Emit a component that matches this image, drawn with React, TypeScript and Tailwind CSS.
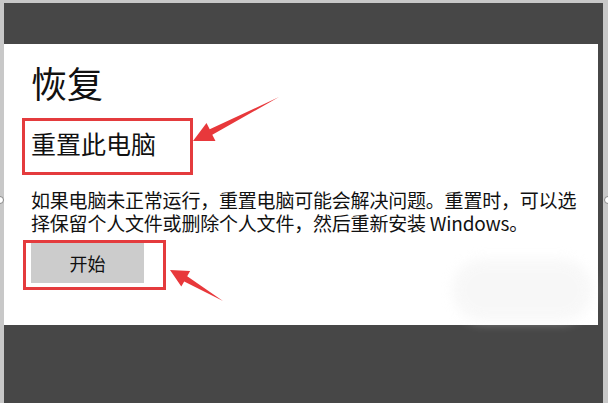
export default function App() {
  const cjk = { fontFamily: '"Noto Sans CJK SC", "Noto Sans", sans-serif' };

  return (
    <div className="relative h-[403px] w-[608px] overflow-hidden bg-[#c8c8c8] pl-[4px] pr-[5px] pt-[3px]" style={cjk}>
      <div className="flex h-full flex-col bg-[#474747]">
        <div className="h-[41px] shrink-0" />
        <div className="relative mr-[5px] flex h-[281px] shrink-0 flex-col items-start bg-white pl-[18px] pt-[14px] text-[#111]">
          <h1 className="pl-[9px] text-[36px] leading-[48px]">恢复</h1>
          <div className="mt-[12px] h-[57px] w-[171px] border-[3px] border-[#e43b3d] pl-[6px] pt-[2px]">
            <h2 className="text-[25px] leading-[40px]">重置此电脑</h2>
          </div>
          <p className="mt-[13px] w-[561px] pl-[9px] text-[19px] leading-[23px] tracking-[-0.2px]">
            如果电脑未正常运行，重置电脑可能会解决问题。重置时，可以选择保留个人文件或删除个人文件，然后重新安装 Windows。
          </p>
          <div className="ml-[1px] mt-[6px] h-[50px] w-[143px] border-[3px] border-[#e43b3d] pl-[5px]">
            <button className="h-[40px] w-[113px] bg-[#cccccc] text-[18px] text-[#111]">开始</button>
          </div>
          <div className="absolute bottom-[4px] right-[6px] h-[62px] w-[140px] rounded-full bg-[#f3f3f3] opacity-60 blur-[6px]" />
        </div>
      </div>

      {/* selection handles */}
      <div className="absolute left-[-4px] top-[196px] h-[8px] w-[8px] rounded-full border border-[#888] bg-white" />
      <div className="absolute right-[-4px] top-[196px] h-[8px] w-[8px] rounded-full border border-[#888] bg-white" />

      {/* annotation arrows */}
      <svg className="absolute left-0 top-0" width="608" height="403" viewBox="0 0 608 403">
        <polygon
          points="279,97 209.7,129.3 206.5,123 193,141 215.5,141 212.3,134.7"
          fill="#e8383b"
        />
        <polygon
          points="223,301 184.2,281.4 181.3,286.6 170,270 190.1,271 187.2,276.2"
          fill="#e8383b"
        />
      </svg>
    </div>
  );
}
